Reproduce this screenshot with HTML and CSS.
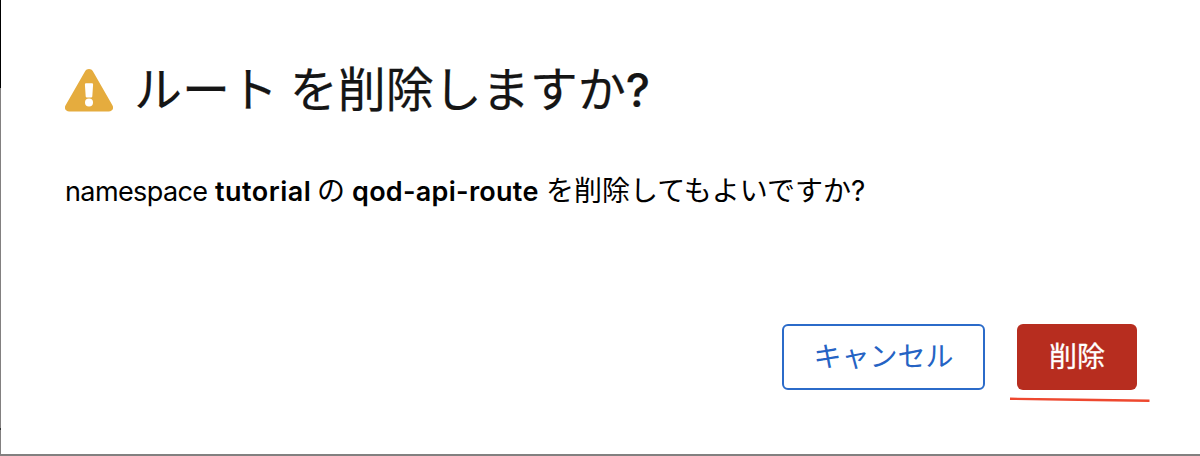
FILE: index.html
```
<!DOCTYPE html>
<html lang="ja">
<head>
<meta charset="utf-8">
<title>ルート を削除しますか?</title>
<link rel="stylesheet" href="styles.css">
</head>
<body>
<div class="frame">
<div class="edge"></div>
<main class="modal">
  <h1 class="title">
    <svg class="warning" viewBox="0 0 48 43" aria-hidden="true">
      <path d="M20.1 2.2C21.6-.6 26.4-.6 27.9 2.2L47.4 36.3C49.2 39.4 47.4 42.500 43.7 42.500H4.3C.6 42.500-1.200 39.4.6 36.3Z" fill="#e5ac3e"/>
      <path d="M21 14.3h6q1.100 0 1.100 1.100l-.8 12q-.1 1.100-1.200 1.100h-4.200q-1.100 0-1.200-1.100l-.8-12q0-1.100 1.100-1.100z" fill="#fff"/>
      <circle cx="24" cy="33.500" r="4" fill="#fff"/>
    </svg>
    <span class="title-text">ルート を削除しますか<span class="mark">?</span></span>
  </h1>
  <p class="message"><span class="latin">namespace</span> <strong class="project">tutorial</strong> <span class="no">の</span> <strong class="route">qod-api-route</strong> <span class="ask">を削除してもよいですか<span class="mark">?</span></span></p>
  <footer class="actions">
    <button class="button cancel">キャンセル</button>
    <div class="danger-wrap">
      <button class="button danger">削除</button>
      <svg class="stroke" viewBox="0 0 142 8" aria-hidden="true"><path d="M2 2.800 70 3.700 141.500 4.700" fill="none" stroke="#ee482f" stroke-width="2.400"/></svg>
    </div>
  </footer>
</main>
</div>
</body>
</html>
```
FILE: styles.css
```
* { box-sizing: border-box; }
body { margin: 0; background: #fff; font-family: Inter, "Noto Sans CJK JP", sans-serif; }
.frame { display: flex; height: 456px; border-bottom: 2px solid #828080; }
.edge { width: 1px; background: linear-gradient(#000 88px, #828080 88px, #828080 428px, #333 428px, #333 430px, #828080 430px); }
.modal { flex: 1; display: flex; flex-direction: column; padding: 59px 63px 64px 64px; }
.title { display: flex; align-items: center; height: 60px; margin: 0; color: #151515; font-size: 48px; font-weight: 400; line-height: 60px; white-space: nowrap; }
.warning { width: 48px; height: 43px; margin: 2px 21px 0 0; }
.title-text { padding-bottom: 2px; font-family: "Noto Sans CJK JP", sans-serif; word-spacing: 1px; -webkit-text-stroke: 0.2px #151515; }
.mark { font-family: Inter, sans-serif; }
.title .mark { font-weight: 500; font-size: 46px; }
.message { display: flex; align-items: baseline; height: 42px; margin: 51px 0 0; color: #000; font-size: 28px; line-height: 42px; white-space: nowrap; }
.message > * { flex: none; }
.latin { width: 150px; font-size: 27px; letter-spacing: -0.6px; }
.message strong { font-size: 27px; font-weight: 600; }
.project { width: 102px; letter-spacing: 0.5px; }
.no { width: 35px; }
.route { width: 194px; letter-spacing: 0.28px; }
.actions { display: flex; justify-content: flex-end; gap: 32px; margin-top: 112px; }
.button { display: block; height: 66px; padding: 0 0 3px; border-radius: 6px; font: 400 28px/59px "Noto Sans CJK JP", sans-serif; }
.cancel { width: 203px; border: 2px solid #2b6bc9; background: #fff; color: #2563c4; }
.danger-wrap { position: relative; }
.danger { width: 120px; border: 0; background: #b72d1f; color: #fff; -webkit-text-stroke: 0.3px #fff; }
.stroke { position: absolute; left: -9px; top: 72px; width: 142px; height: 8px; }
```
